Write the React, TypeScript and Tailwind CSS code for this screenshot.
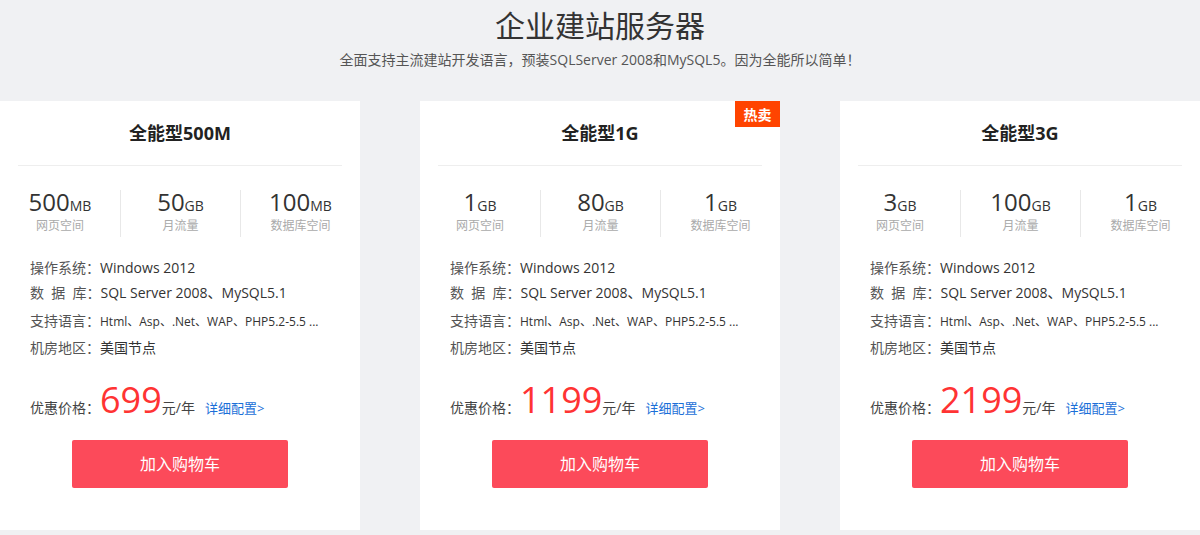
const plans = [
  {
    name: '全能型500M',
    hot: false,
    stats: [
      { value: '500', unit: 'MB', label: '网页空间' },
      { value: '50', unit: 'GB', label: '月流量' },
      { value: '100', unit: 'MB', label: '数据库空间' },
    ],
    price: '699',
  },
  {
    name: '全能型1G',
    hot: true,
    stats: [
      { value: '1', unit: 'GB', label: '网页空间' },
      { value: '80', unit: 'GB', label: '月流量' },
      { value: '1', unit: 'GB', label: '数据库空间' },
    ],
    price: '1199',
  },
  {
    name: '全能型3G',
    hot: false,
    stats: [
      { value: '3', unit: 'GB', label: '网页空间' },
      { value: '100', unit: 'GB', label: '月流量' },
      { value: '1', unit: 'GB', label: '数据库空间' },
    ],
    price: '2199',
  },
]

type Plan = (typeof plans)[number]

export default function App() {
  return (
    <div
      className="h-[535px] w-[1200px] overflow-hidden bg-[#f0f1f3] text-[#333]"
      style={{ fontFamily: '"Open Sans", "Noto Sans CJK SC", sans-serif' }}
    >
      {/* Header */}
      <div className="pt-2 text-center">
        <h1 className="text-[30px] leading-[36px] text-[#333]">企业建站服务器</h1>
        <p className="mt-[6px] text-[14px] leading-[20px] text-[#555]">
          全面支持主流建站开发语言，预装SQLServer 2008和MySQL5。因为全能所以简单！
        </p>
      </div>

      {/* Cards */}
      <div className="mt-[31px] flex gap-[60px]">
        {plans.map((plan) => (
          <PlanCard key={plan.name} plan={plan} />
        ))}
      </div>
    </div>
  )
}

function PlanCard({ plan }: { plan: Plan }) {
  return (
    <div className="relative h-[429px] w-[360px] bg-white">
      {plan.hot && (
        <div className="absolute right-0 top-0 flex h-[26px] w-[45px] items-center justify-center bg-[#ff4400] text-[14px] font-bold text-white">
          热卖
        </div>
      )}
      <h2 className="pt-5 text-center text-[18px] font-bold leading-[24px] text-[#222]">{plan.name}</h2>
      <div className="mx-[18px] mt-5 h-px bg-[#eeeeee]" />

      {/* Stats */}
      <div className="mt-6 grid grid-cols-3">
        {plan.stats.map((s, i) => (
          <div
            key={s.label}
            className={`pb-[3px] text-center ${i > 0 ? 'border-l border-[#e8e8e8]' : ''}`}
          >
            <div className="leading-[24px]">
              <span className="text-[24px] text-[#333]">{s.value}</span>
              <span className="text-[14px] text-[#333]">{s.unit}</span>
            </div>
            <div className="text-[12px] leading-[16px] text-[#aaa]">{s.label}</div>
          </div>
        ))}
      </div>

      {/* Specs */}
      <div className="mt-[18px] px-[30px] text-[14px] text-[#555]">
        <div className="leading-[25px]">
          操作系统：<span className="text-[#333]">Windows 2012</span>
        </div>
        <div className="leading-[25px]">
          数&nbsp;&nbsp;据&nbsp;&nbsp;库：<span className="text-[#333]">SQL Server 2008、MySQL5.1</span>
        </div>
        <div className="leading-[31px]">
          支持语言：<span className="text-[12px] text-[#333]">Html、Asp、.Net、WAP、PHP5.2-5.5 ...</span>
        </div>
        <div className="leading-[22px]">
          机房地区：<span className="text-[#333]">美国节点</span>
        </div>
      </div>

      {/* Price */}
      <div className="mt-[21px] flex items-baseline px-[30px]">
        <span className="text-[14px] text-[#444]">优惠价格：</span>
        <span className="text-[36px] leading-[40px] text-[#ff3333]">{plan.price}</span>
        <span className="text-[14px] text-[#444]">元/年</span>
        <a href="#" className="ml-[10px] text-[13px] text-[#1a6fd8]">
          详细配置&gt;
        </a>
      </div>

      {/* Button */}
      <button className="mx-auto mt-5 block h-12 w-[216px] rounded-[2px] bg-[#fc4a5a] text-[16px] text-white">
        加入购物车
      </button>
    </div>
  )
}
